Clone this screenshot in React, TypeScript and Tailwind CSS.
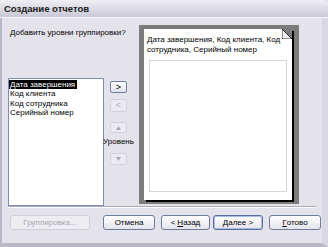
import React from "react";

function Btn({
  children,
  w,
  ml,
  disabled,
  primary,
}: {
  children: React.ReactNode;
  w: string;
  ml: string;
  disabled?: boolean;
  primary?: boolean;
}) {
  return (
    <div
      className={`${w} ${ml} h-[15px] rounded-[3px] border flex items-center justify-center text-[8px] leading-none whitespace-nowrap ${
        disabled
          ? "border-[#cfcdd6] bg-[#eeedf2] text-[#a6a5ad]"
          : primary
          ? "border-[#5a6c9c] bg-gradient-to-b from-[#ffffff] to-[#e4e3ec] shadow-[inset_0_0_0_1px_#a9bde6] text-black"
          : "border-[#6f7c9a] bg-gradient-to-b from-[#ffffff] to-[#e4e3ec] text-black"
      }`}
    >
      {children}
    </div>
  );
}

function SmallBtn({
  children,
  mt,
  h,
  active,
}: {
  children: React.ReactNode;
  mt: string;
  h: string;
  active?: boolean;
}) {
  return (
    <div
      className={`${mt} ${h} w-[17px] rounded-[2px] border flex items-center justify-center text-[9px] leading-none ${
        active
          ? "border-[#6f7c9a] bg-gradient-to-b from-[#ffffff] to-[#e2e1ea] text-black"
          : "border-[#d2d1da] bg-[#ebeaf0] text-[#b4b3bb]"
      }`}
    >
      {children}
    </div>
  );
}

export default function App() {
  return (
    <div className="w-[328px] h-[247px] flex flex-col bg-[#e4e3eb] overflow-hidden font-['Liberation_Sans',Arial,sans-serif] text-black">
      {/* title bar */}
      <div className="h-[18px] shrink-0 flex items-center pl-[4px] pt-[2px] rounded-tr-[6px] bg-gradient-to-b from-[#efeef4] to-[#c9c8d7] border-b border-[#f4f4f8]">
        <span className="text-[9.5px] font-bold text-[#202020]">Создание отчетов</span>
      </div>

      <div className="flex-1 flex flex-col border-l-[2px] border-l-[#b7b6c4] border-r-[6px] border-r-[#d9d8e2] border-b-[4px] border-b-[#b9b8c6]">
        <div className="h-[188px] shrink-0 flex pt-[7px]">
          {/* left column */}
          <div className="ml-[6px] w-[96px] flex flex-col">
            <div className="pt-[3px] pl-[2px] text-[8px] leading-[10px] whitespace-nowrap">
              Добавить уровни группировки?
            </div>
            <div className="mt-[40px] h-[130px] bg-white border border-[#7f8db0] flex flex-col text-[8px] leading-[9px] pt-[1px] whitespace-nowrap">
              <div className="bg-black text-white pl-[1px] h-[9px] w-[68px]">Дата завершения</div>
              <div className="pl-[1px] h-[9.5px]">Код клиента</div>
              <div className="pl-[1px] h-[9.5px]">Код сотрудника</div>
              <div className="pl-[1px] h-[9.5px]">Серийный номер</div>
            </div>
          </div>

          {/* middle buttons */}
          <div className="ml-[6px] w-[17px] flex flex-col items-center">
            <SmallBtn mt="mt-[56px]" h="h-[12px]" active>
              &gt;
            </SmallBtn>
            <SmallBtn mt="mt-[6px]" h="h-[13px]">
              &lt;
            </SmallBtn>
            <SmallBtn mt="mt-[10px]" h="h-[11px]">
              <svg width="5" height="4" viewBox="0 0 5 4">
                <path d="M2.5 0 L5 4 L0 4 Z" fill="#a9a8b0" />
              </svg>
            </SmallBtn>
            <div className="mt-[4px] text-[8px] leading-[9px] whitespace-nowrap">Уровень</div>
            <SmallBtn mt="mt-[7px]" h="h-[12px]">
              <svg width="5" height="4" viewBox="0 0 5 4">
                <path d="M0 0 L5 0 L2.5 4 Z" fill="#a9a8b0" />
              </svg>
            </SmallBtn>
          </div>

          {/* preview */}
          <div className="ml-[12px] w-[160px] h-[179px] bg-[#7c7c7c] pl-[5px] pt-[4px]">
            <div className="relative w-[148px] h-[171px] bg-white shadow-[2px_2px_0_#000] flex flex-col">
              <div className="pl-[3px] pt-[6px] pr-[2px] text-[8px] leading-[10px]">
                Дата завершения, Код клиента, Код сотрудника, Серийный номер
              </div>
              <div className="mx-[5px] mt-[5px] mb-[8px] flex-1 border border-[#d6d6d6]" />
              <svg className="absolute top-0 right-0" width="10" height="10" viewBox="0 0 10 10">
                <path d="M0 0 L10 0 L10 10 Z" fill="#7c7c7c" />
                <path d="M0 0 L10 10 L0 10 Z" fill="#f2f2f2" stroke="#000" strokeWidth="0.8" />
              </svg>
            </div>
          </div>
        </div>

        {/* separator */}
        <div className="mx-[6px] h-[2px] border-t border-[#a9a8b6] border-b border-b-[#fbfbfd]" />

        {/* bottom buttons */}
        <div className="mt-[7px] flex">
          <Btn w="w-[80px]" ml="ml-[8px]" disabled>
            Группировка...
          </Btn>
          <Btn w="w-[52px]" ml="ml-[13px]">
            Отмена
          </Btn>
          <Btn w="w-[49px]" ml="ml-[6px]">
            &lt; <span className="underline ml-[2px]">Н</span>азад
          </Btn>
          <Btn w="w-[50px]" ml="ml-[3px]" primary>
            <span className="underline">Д</span>алее &gt;
          </Btn>
          <Btn w="w-[52px]" ml="ml-[6px]">
            <span className="underline">Г</span>отово
          </Btn>
        </div>
      </div>
    </div>
  );
}
